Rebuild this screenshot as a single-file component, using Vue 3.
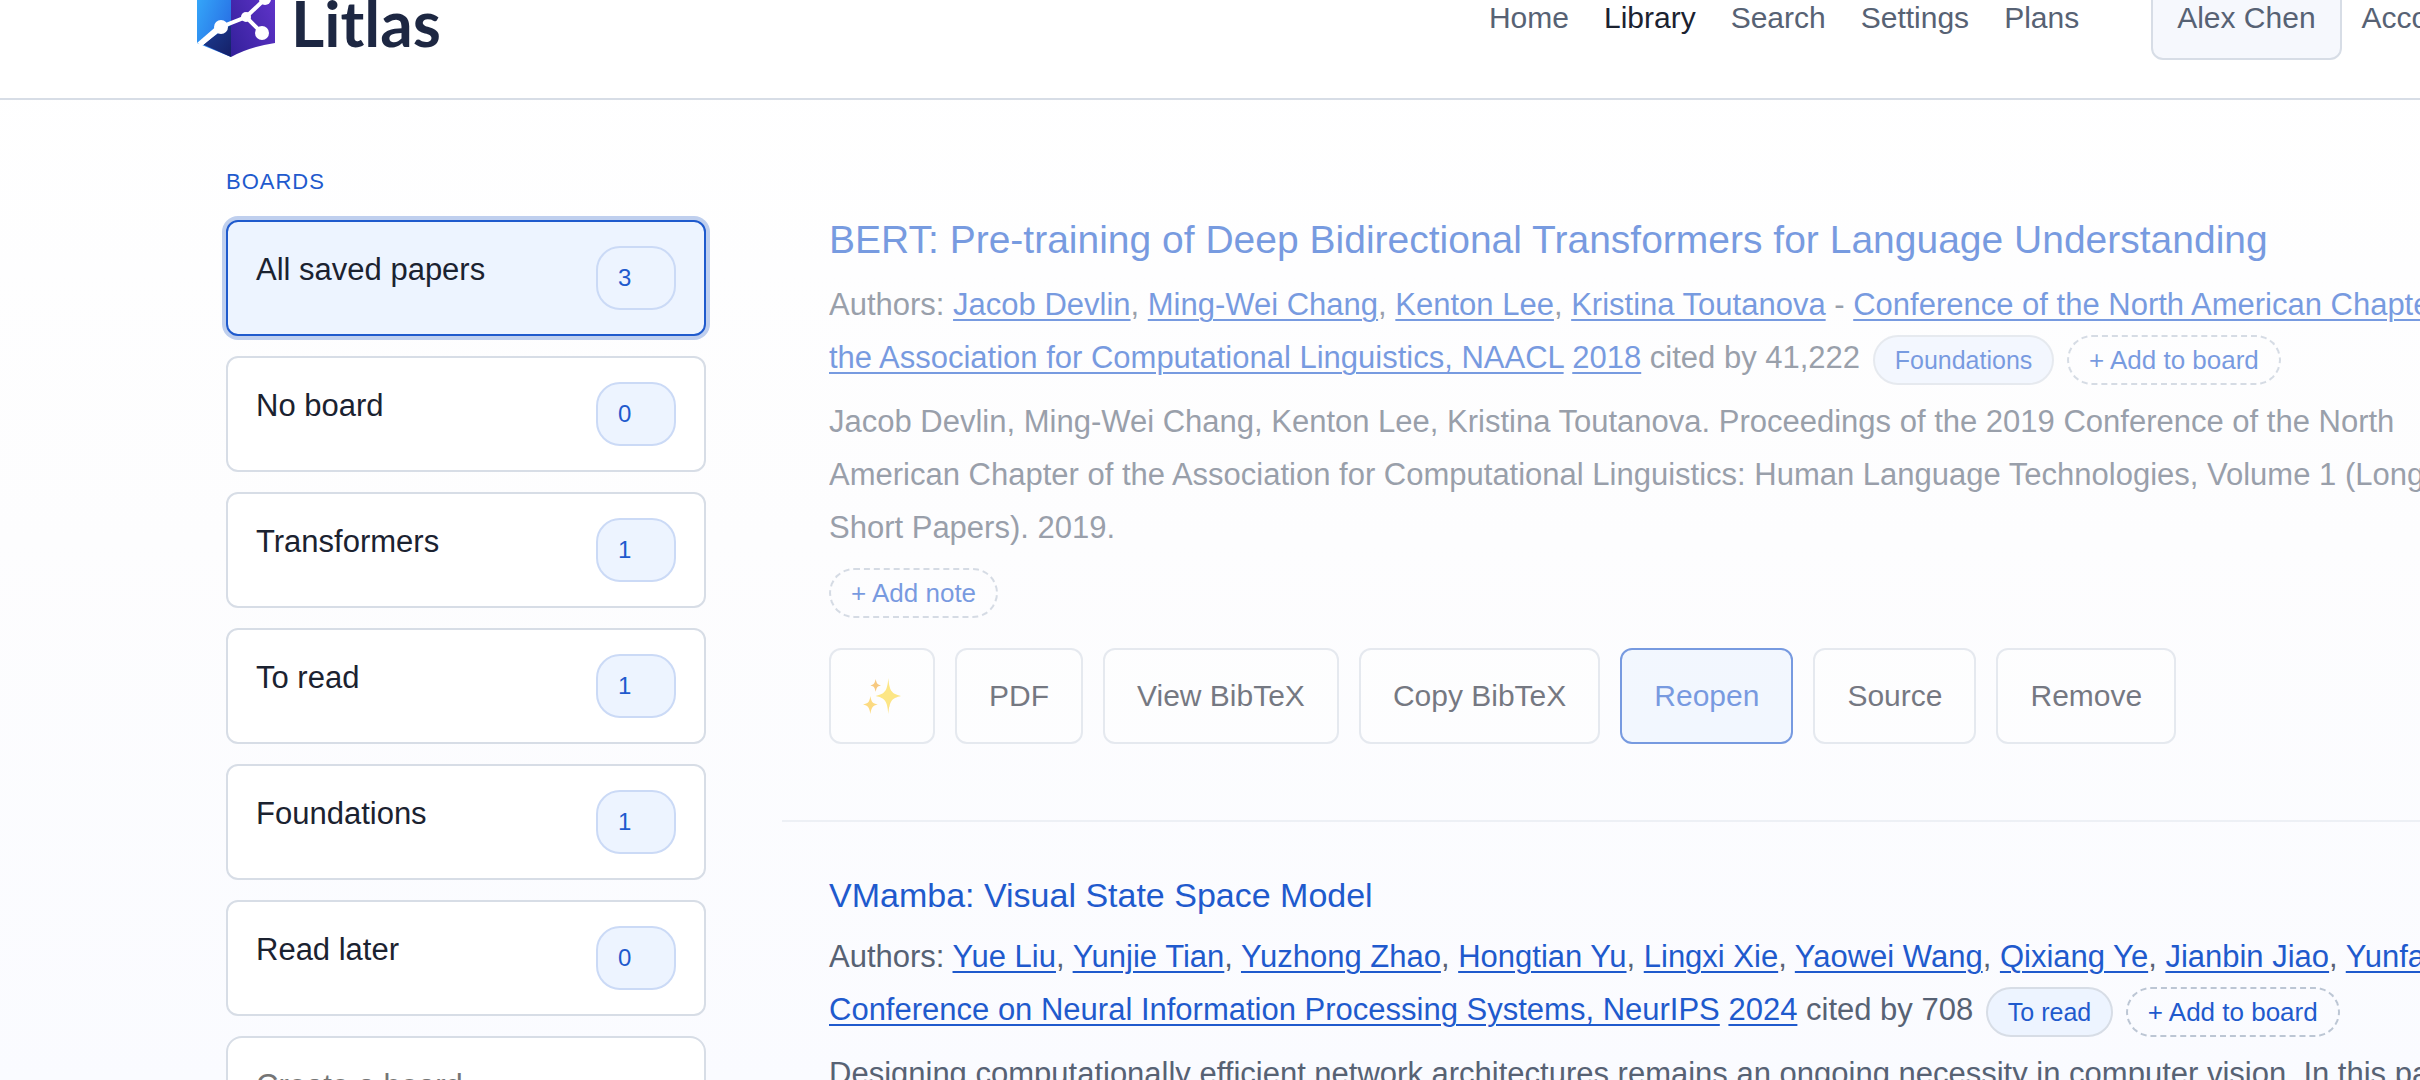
<script setup>
import { ref } from 'vue'

const links = ['Home', 'Library', 'Search', 'Settings', 'Plans']
const boards = [
  { name: 'All saved papers', count: 3 },
  { name: 'No board', count: 0 },
  { name: 'Transformers', count: 1 },
  { name: 'To read', count: 1 },
  { name: 'Foundations', count: 1 },
  { name: 'Read later', count: 0 },
]
const active = ref('All saved papers')
const bertAuthors = ['Jacob Devlin', 'Ming-Wei Chang', 'Kenton Lee', 'Kristina Toutanova']
const mambaAuthors = ['Yue Liu', 'Yunjie Tian', 'Yuzhong Zhao', 'Hongtian Yu', 'Lingxi Xie', 'Yaowei Wang', 'Qixiang Ye', 'Jianbin Jiao', 'Yunfan Liu']
</script>

<template>
  <div class="page">
    <header class="topbar">
      <a class="brand" href="#">
        <svg class="mark" viewBox="0 0 78 94" aria-hidden="true">
          <defs>
            <linearGradient id="left" x1="0" y1="0" x2="1" y2="1">
              <stop offset="0" stop-color="#38b6ff" />
              <stop offset="1" stop-color="#2563e0" />
            </linearGradient>
            <linearGradient id="right" x1="0" y1="1" x2="1" y2="0">
              <stop offset="0" stop-color="#33209a" />
              <stop offset="1" stop-color="#6a38d4" />
            </linearGradient>
            <linearGradient id="base" x1="0" y1="0" x2="1" y2="1">
              <stop offset="0" stop-color="#1c3f95" />
              <stop offset="1" stop-color="#151f66" />
            </linearGradient>
          </defs>
          <path d="M0 14 L34 0 V94 L0 80Z" fill="url(#left)" />
          <path d="M34 62 V94 L5 81Z" fill="url(#base)" />
          <path d="M34 0 L78 14 V80 Q52 84 34 94Z" fill="url(#right)" />
          <path d="M3 82 L24 64 L49 54 L68 36 M49 54 L65 70" fill="none" stroke="#fff" stroke-width="4" />
          <path d="M0 80 L22 61 L26 66 L6 82Z" fill="#fff" />
          <circle cx="24" cy="64" r="7" fill="#fff" />
          <circle cx="49" cy="54" r="5" fill="#fff" />
          <circle cx="68" cy="36" r="6" fill="#fff" />
          <circle cx="65" cy="70" r="7" fill="#fff" />
        </svg>
        <span class="wordmark">Litlas</span>
      </a>
      <nav class="nav">
        <a v-for="l in links" :key="l" href="#" :class="{ current: l === 'Library' }">{{ l }}</a>
      </nav>
      <div class="account">
        <button type="button" class="user">Alex Chen</button>
        <a href="#">Account</a>
      </div>
    </header>

    <div class="layout">
      <aside class="sidebar">
        <h2>BOARDS</h2>
        <button
          v-for="b in boards"
          :key="b.name"
          type="button"
          class="board"
          :class="{ active: b.name === active }"
          @click="active = b.name"
        >
          <span class="name">{{ b.name }}</span>
          <span class="count">{{ b.count }}</span>
        </button>
        <input class="create" type="text" placeholder="Create a board" aria-label="Create a board" />
      </aside>

      <main class="papers">
        <article class="paper done">
          <h3 class="large"><a href="#">BERT: Pre-training of Deep Bidirectional Transformers for Language Understanding</a></h3>
          <p class="meta">
            Authors:
            <template v-for="(a, i) in bertAuthors" :key="a"><a href="#">{{ a }}</a>{{ i < 3 ? ', ' : ' ' }}</template>-
            <a href="#">Conference of the North American Chapter of<br />the Association for Computational Linguistics, NAACL</a>{{ ' ' }}
            <a href="#">2018</a> cited by 41,222
            <button type="button" class="pill tag">Foundations</button>{{ ' ' }}
            <button type="button" class="pill add">+ Add to board</button>
          </p>
          <p class="abstract">
            Jacob Devlin, Ming-Wei Chang, Kenton Lee, Kristina Toutanova. Proceedings of the 2019 Conference of the North<br />
            American Chapter of the Association for Computational Linguistics: Human Language Technologies, Volume 1 (Long and<br />
            Short Papers). 2019.
          </p>
          <button type="button" class="pill add note">+ Add note</button>
          <div class="actions">
            <button type="button" aria-label="Summarize">
              <svg class="sparkles" viewBox="0 0 36 36" aria-hidden="true">
                <path fill="#fdd835" d="M24 1 C25 13 27 16 36 18 C27 20 25 23 24 35 C23 23 21 20 12 18 C21 16 23 13 24 1Z" />
                <path fill="#f4a82c" d="M36 18 C27 20 25 23 24 35 C24 25 26 20 36 18Z" />
                <path fill="#fdc52e" d="M7 18 C8 24 9 25 14 26 C9 27 8 29 7 35 C6 29 5 27 0 26 C5 25 6 24 7 18Z" />
                <path fill="#f4a82c" d="M12 2 C13 6 13 7 17 8 C13 9 13 10 12 14 C11 10 11 9 7 8 C11 7 11 6 12 2Z" />
              </svg>
            </button>
            <button type="button">PDF</button>
            <button type="button">View BibTeX</button>
            <button type="button">Copy BibTeX</button>
            <button type="button" class="primary">Reopen</button>
            <button type="button">Source</button>
            <button type="button">Remove</button>
          </div>
        </article>

        <article class="paper">
          <h3><a href="#">VMamba: Visual State Space Model</a></h3>
          <p class="meta">
            Authors:
            <template v-for="(a, i) in mambaAuthors" :key="a"><a href="#">{{ a }}</a>{{ i < 8 ? ', ' : ' ' }}</template>-<br />
            <a href="#">Conference on Neural Information Processing Systems, NeurIPS</a>{{ ' ' }}
            <a href="#">2024</a> cited by 708
            <button type="button" class="pill tag">To read</button>{{ ' ' }}
            <button type="button" class="pill add">+ Add to board</button>
          </p>
          <p class="abstract">
            Designing computationally efficient network architectures remains an ongoing necessity in computer vision. In this paper,
          </p>
        </article>
      </main>
    </div>
  </div>
</template>

<style>
body {
  margin: 0;
}
</style>

<style scoped>
.page {
  height: 100vh;
  overflow: hidden;
  color: #1b2230;
  background: linear-gradient(#ffffff, #fdfdfe 50%, #fafbff);
  font-family: "Liberation Sans", Arial, sans-serif;
  font-size: 31px;
}
button,
input {
  font: inherit;
  color: inherit;
  box-sizing: border-box;
}
button {
  cursor: pointer;
}
a {
  color: #1f5acd;
}
.topbar {
  box-sizing: border-box;
  height: 164px;
  margin: -64px -50px 0 0;
  padding: 2px 0 0 197px;
  display: flex;
  align-items: center;
  background: #fff;
  border-bottom: 2px solid #d7dde6;
  font-size: 30px;
}
.topbar a {
  color: #576274;
  text-decoration: none;
}
.topbar .brand {
  display: flex;
  align-items: center;
  gap: 16px;
  color: #1d2742;
}
.mark {
  width: 78px;
  height: 94px;
  margin-bottom: 16px;
}
.wordmark {
  font: 700 64px/80px Lato, "Open Sans", sans-serif;
  margin-top: 10px;
}
.nav {
  display: flex;
  gap: 35px;
  margin-left: auto;
}
.topbar .current {
  color: #1b2230;
}
.account {
  display: flex;
  align-items: center;
  gap: 20px;
  margin-left: 72px;
}
.user {
  height: 84px;
  padding: 0 24px;
  color: #576274;
  background: #f6f8fd;
  border: 2px solid #d7dde6;
  border-radius: 12px;
}
.layout {
  display: flex;
  align-items: flex-start;
  gap: 76px;
  padding-left: 226px;
}
.sidebar {
  width: 480px;
  flex: none;
  display: flex;
  flex-direction: column;
  gap: 20px;
  padding-top: 64px;
}
.sidebar h2 {
  margin: 0;
  font-size: 22px;
  line-height: 36px;
  font-weight: 400;
  letter-spacing: 1px;
  color: #1f5acd;
}
.board {
  height: 116px;
  padding: 24px 28px;
  display: flex;
  justify-content: space-between;
  align-items: flex-start;
  text-align: left;
  background: #fff;
  border: 2px solid #d7dde6;
  border-radius: 12px;
}
.board.active {
  background: #edf4ff;
  border-color: #1f5acd;
  box-shadow: 0 0 0 4px #bfcfee;
}
.name {
  line-height: 47px;
}
.count {
  box-sizing: border-box;
  width: 80px;
  height: 64px;
  padding-left: 20px;
  font-size: 24px;
  line-height: 60px;
  color: #1f5acd;
  background: #edf4ff;
  border: 2px solid #cbdaf6;
  border-radius: 24px;
}
.create {
  height: 100px;
  padding: 0 28px;
  background: #fff;
  border: 2px solid #d7dde6;
  border-radius: 16px;
}
.create::placeholder {
  color: #757575;
  opacity: 1;
}
.papers {
  flex: 1;
  min-width: 0;
  padding-top: 66px;
}
.paper {
  padding: 48px 0 76px 47px;
  white-space: nowrap;
  border-bottom: 2px solid #edf0f5;
}
.done > * {
  opacity: 0.6;
}
h3 {
  margin: 0 0 10px;
  font-size: 34px;
  line-height: 50px;
  font-weight: 400;
}
h3.large {
  margin-bottom: 12px;
  font-size: 39px;
  line-height: 52px;
}
h3 a {
  text-decoration: none;
}
.meta,
.abstract {
  margin: 0;
  line-height: 53px;
  color: #576274;
}
.meta a {
  text-underline-offset: 4px;
  text-decoration-thickness: 2px;
}
.abstract {
  margin-top: 10px;
}
.pill {
  height: 50px;
  margin-left: 4px;
  padding: 0 20px;
  font-size: 25px;
  line-height: 44px;
  vertical-align: middle;
  color: #1f5acd;
  border-radius: 25px;
}
.tag {
  background: #edf4ff;
  border: 2px solid #d7dde6;
}
.add {
  font-size: 26px;
  background: transparent;
  border: 2px dashed #bcc6d4;
}
.note {
  display: block;
  margin: 14px 0 0;
}
.actions {
  display: flex;
  gap: 20px;
  margin-top: 30px;
  font-size: 30px;
}
.actions button {
  height: 96px;
  padding: 0 32px;
  background: #fff;
  border: 2px solid #d7dde6;
  border-radius: 12px;
}
.actions .primary {
  color: #1f5acd;
  background: #edf4ff;
  border-color: #1f5acd;
}
.sparkles {
  display: block;
  width: 38px;
  height: 38px;
}
</style>
